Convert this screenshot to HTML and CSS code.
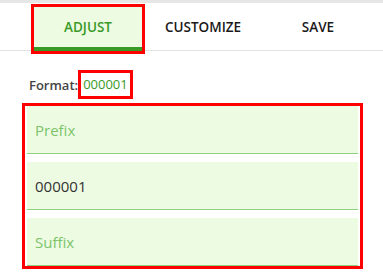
FILE: index.html
```html
<!DOCTYPE html>
<html>
<head>
<meta charset="utf-8">
<link rel="stylesheet" href="styles.css">
</head>
<body>
<div class="tabs">
  <div class="tab active">ADJUST</div>
  <div class="tab">CUSTOMIZE</div>
  <div class="tab">SAVE</div>
</div>
<div class="format-row">
  <span class="format-label">Format:</span> <span class="format-value">000001</span>
</div>
<div class="fields">
  <div class="field placeholder">Prefix</div>
  <div class="field">000001</div>
  <div class="field placeholder">Suffix</div>
</div>
</body>
</html>
```
FILE: styles.css
```css
html, body {
  margin: 0;
  padding: 0;
  background: #ffffff;
}
body {
  font-family: "Open Sans", "Noto Sans", sans-serif;
  width: 383px;
  height: 276px;
  overflow: hidden;
}
.tabs {
  display: flex;
  gap: 7px;
  border-top: 3px solid #e6e6e6;
  border-bottom: 1px solid #e2e2e2;
  padding: 4px 0 0 34px;
  height: 43px;
}
.tab {
  width: 108px;
  height: 40px;
  margin-bottom: -1px;
  border-bottom: 4px solid transparent;
  display: flex;
  align-items: center;
  justify-content: center;
  font-size: 13.5px;
  font-weight: 600;
  color: #1a1a1a;
}
.tab.active {
  background: #edfbe3;
  color: #3a9a27;
  border-bottom-color: #3a9a27;
  outline: 3px solid #ff0000;
}
.format-row {
  margin: 22px 0 0 29px;
  height: 23px;
  display: flex;
  align-items: center;
  font-size: 13px;
}
.format-label {
  color: #444444;
  font-weight: 600;
  margin-right: 3px;
}
.format-value {
  color: #3a9a27;
  padding: 0 2px;
  line-height: 23px;
  outline: 3px solid #ff0000;
}
.fields {
  margin: 10px 0 0 25px;
  width: 331px;
  padding: 0 2px;
  display: flex;
  flex-direction: column;
  gap: 8px;
  outline: 3px solid #ff0000;
}
.field {
  height: 47px;
  background: #edfbe3;
  border-bottom: 1px solid #8fcf7e;
  display: flex;
  align-items: center;
  padding-left: 8px;
  font-size: 15px;
  color: #333333;
}
.field.placeholder {
  color: #7cc46a;
}
```
